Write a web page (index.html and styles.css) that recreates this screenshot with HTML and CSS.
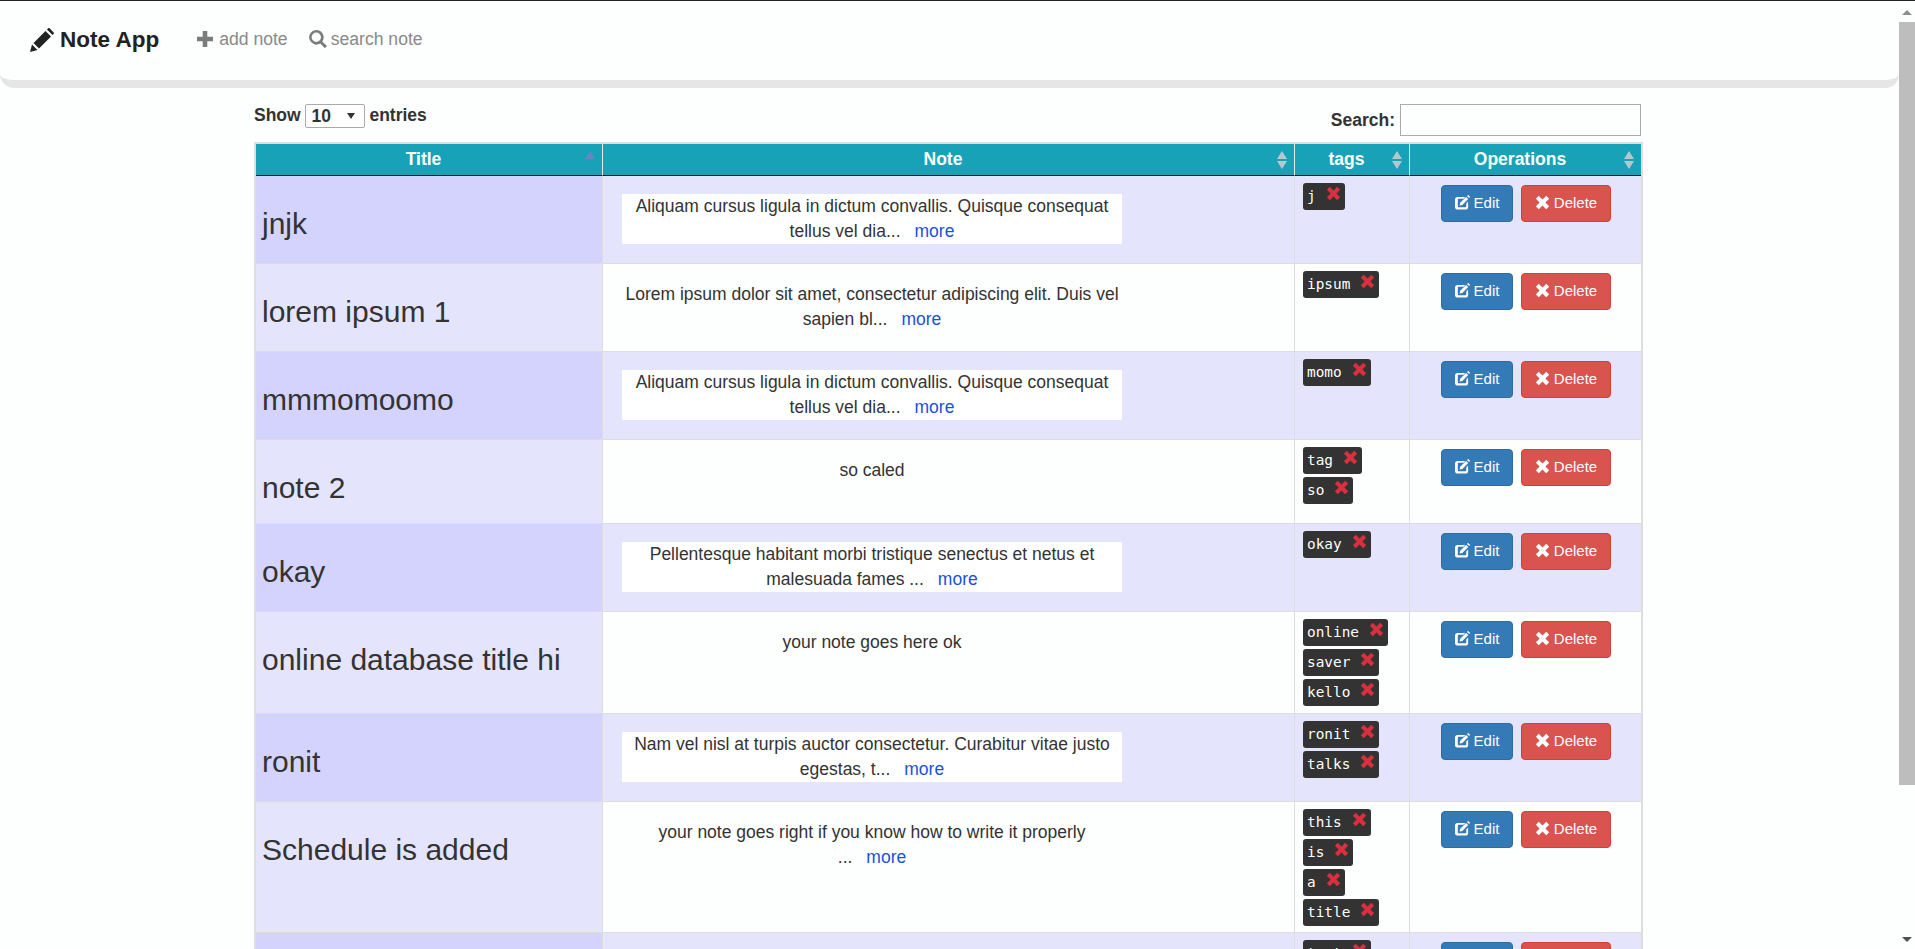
FILE: index.html
```html
<!DOCTYPE html>
<html lang="en">
<head>
<meta charset="utf-8">
<title>Note App</title>
<link rel="stylesheet" href="styles.css">
</head>
<body>
<svg class="defs" width="0" height="0" aria-hidden="true">
  <symbol id="i-pencil" viewBox="0 0 24 24"><path d="M0 24l2-7.500 5.500 5.500zM3.500 15L15.500 3l5.500 5.500-12 12zM17 1.500L18.200.3c.4-.4 1-.4 1.400 0l4.100 4.100c.4.400.4 1 0 1.400L22.500 7z"/></symbol>
  <symbol id="i-plus" viewBox="0 0 16 16"><path d="M5.700 0h4.600v5.700H16v4.600h-5.700V16H5.700v-5.700H0V5.700h5.700z"/></symbol>
  <symbol id="i-search" viewBox="0 0 18 18"><path fill-rule="evenodd" d="M7.300 0a7.300 7.300 0 0 1 5.900 11.600l4.800 4.500-2.100 2.100-4.600-4.700A7.300 7.300 0 1 1 7.300 0zm0 2.600a4.700 4.700 0 1 0 0 9.400 4.700 4.700 0 0 0 0-9.400z"/></symbol>
  <symbol id="i-edit" viewBox="0 0 16 16"><path d="M3 2h8L9 4H3.800c-.5 0-.8.300-.8.800v7.400c0 .5.300.8.800.8h7.400c.5 0 .8-.3.800-.8V9l2-2v6c0 1.400-1.200 2.500-2.500 2.500h-8C1.200 15.500 0 14.400 0 13V4.500C0 3.100 1.200 2 2.500 2z"/><path d="M5.500 8.300L11.800 2l2.300 2.300-6.300 6.300-2.800.5zM12.800 1l.8-.8c.2-.2.500-.2.700 0l1.500 1.500c.2.200.2.500 0 .7l-.8.800z"/></symbol>
  <symbol id="i-remove" viewBox="0 0 14 14"><path d="M3.500.8L7 4.300 10.500.8l2.700 2.700L9.700 7l3.500 3.500-2.700 2.700L7 9.700l-3.500 3.500-2.700-2.700L4.300 7 .8 3.500z"/></symbol>
</svg>
<div class="shell">
  <div class="page">
    <header class="navbar">
      <a class="brand"><svg class="ic-brand"><use href="#i-pencil"/></svg>Note App</a>
      <a class="nav-link"><svg class="ic-plus"><use href="#i-plus"/></svg>add note</a>
      <a class="nav-link"><svg class="ic-search"><use href="#i-search"/></svg>search note</a>
    </header>
    <main class="content">
      <div class="controls">
        <label class="length">Show <span class="select">10<span class="caret"></span></span> entries</label>
        <label class="filter">Search: <span class="search-box"></span></label>
      </div>
      <table class="notes">
        <colgroup><col class="c-title"><col class="c-note"><col class="c-tags"><col class="c-ops"></colgroup>
        <thead>
          <tr>
            <th class="sorted">Title</th>
            <th>Note</th>
            <th>tags</th>
            <th>Operations</th>
          </tr>
        </thead>
        <tbody>
          <tr class="odd h88">
            <td class="title">jnjk</td>
            <td class="note"><div class="txt boxed">Aliquam cursus ligula in dictum convallis. Quisque consequat tellus vel dia...<a class="more">more</a></div></td>
            <td class="tags"><span class="tag">j<svg><use href="#i-remove"/></svg></span></td>
            <td class="ops"><a class="btn edit"><svg><use href="#i-edit"/></svg>Edit</a><a class="btn del"><svg><use href="#i-remove"/></svg>Delete</a></td>
          </tr>
          <tr class="even h88">
            <td class="title">lorem ipsum 1</td>
            <td class="note"><div class="txt">Lorem ipsum dolor sit amet, consectetur adipiscing elit. Duis vel sapien bl...<a class="more">more</a></div></td>
            <td class="tags"><span class="tag">ipsum<svg><use href="#i-remove"/></svg></span></td>
            <td class="ops"><a class="btn edit"><svg><use href="#i-edit"/></svg>Edit</a><a class="btn del"><svg><use href="#i-remove"/></svg>Delete</a></td>
          </tr>
          <tr class="odd h88">
            <td class="title">mmmomoomo</td>
            <td class="note"><div class="txt boxed">Aliquam cursus ligula in dictum convallis. Quisque consequat tellus vel dia...<a class="more">more</a></div></td>
            <td class="tags"><span class="tag">momo<svg><use href="#i-remove"/></svg></span></td>
            <td class="ops"><a class="btn edit"><svg><use href="#i-edit"/></svg>Edit</a><a class="btn del"><svg><use href="#i-remove"/></svg>Delete</a></td>
          </tr>
          <tr class="even h84">
            <td class="title">note 2</td>
            <td class="note"><div class="txt">so caled</div></td>
            <td class="tags"><span class="tag">tag<svg><use href="#i-remove"/></svg></span><span class="tag">so<svg><use href="#i-remove"/></svg></span></td>
            <td class="ops"><a class="btn edit"><svg><use href="#i-edit"/></svg>Edit</a><a class="btn del"><svg><use href="#i-remove"/></svg>Delete</a></td>
          </tr>
          <tr class="odd h88">
            <td class="title">okay</td>
            <td class="note"><div class="txt boxed">Pellentesque habitant morbi tristique senectus et netus et malesuada fames ...<a class="more">more</a></div></td>
            <td class="tags"><span class="tag">okay<svg><use href="#i-remove"/></svg></span></td>
            <td class="ops"><a class="btn edit"><svg><use href="#i-edit"/></svg>Edit</a><a class="btn del"><svg><use href="#i-remove"/></svg>Delete</a></td>
          </tr>
          <tr class="even h102">
            <td class="title">online database title hi</td>
            <td class="note"><div class="txt">your note goes here ok</div></td>
            <td class="tags"><span class="tag">online<svg><use href="#i-remove"/></svg></span><span class="tag">saver<svg><use href="#i-remove"/></svg></span><span class="tag">kello<svg><use href="#i-remove"/></svg></span></td>
            <td class="ops"><a class="btn edit"><svg><use href="#i-edit"/></svg>Edit</a><a class="btn del"><svg><use href="#i-remove"/></svg>Delete</a></td>
          </tr>
          <tr class="odd h88">
            <td class="title">ronit</td>
            <td class="note"><div class="txt boxed">Nam vel nisl at turpis auctor consectetur. Curabitur vitae justo egestas, t...<a class="more">more</a></div></td>
            <td class="tags"><span class="tag">ronit<svg><use href="#i-remove"/></svg></span><span class="tag">talks<svg><use href="#i-remove"/></svg></span></td>
            <td class="ops"><a class="btn edit"><svg><use href="#i-edit"/></svg>Edit</a><a class="btn del"><svg><use href="#i-remove"/></svg>Delete</a></td>
          </tr>
          <tr class="even h131">
            <td class="title">Schedule is added</td>
            <td class="note"><div class="txt">your note goes right if you know how to write it properly<br>...<a class="more">more</a></div></td>
            <td class="tags"><span class="tag">this<svg><use href="#i-remove"/></svg></span><span class="tag">is<svg><use href="#i-remove"/></svg></span><span class="tag">a<svg><use href="#i-remove"/></svg></span><span class="tag">title<svg><use href="#i-remove"/></svg></span></td>
            <td class="ops"><a class="btn edit"><svg><use href="#i-edit"/></svg>Edit</a><a class="btn del"><svg><use href="#i-remove"/></svg>Delete</a></td>
          </tr>
          <tr class="odd h88">
            <td class="title">test</td>
            <td class="note"><div class="txt boxed">your note</div></td>
            <td class="tags"><span class="tag">test<svg><use href="#i-remove"/></svg></span></td>
            <td class="ops"><a class="btn edit"><svg><use href="#i-edit"/></svg>Edit</a><a class="btn del"><svg><use href="#i-remove"/></svg>Delete</a></td>
          </tr>
        </tbody>
      </table>
    </main>
  </div>
  <aside class="scrollbar">
    <span class="arrow up"></span>
    <span class="thumb"></span>
    <span class="arrow down"></span>
  </aside>
</div>
</body>
</html>
```
FILE: styles.css
```css
* { box-sizing: border-box; }
html, body { margin: 0; height: 100%; overflow: hidden; }
body { background: #fdfefe; color: #333; font-family: "Liberation Sans", Arial, sans-serif; font-size: 17.5px; }
.defs { position: absolute; }
.shell { display: flex; height: 949px; border-top: 1px solid #222; }
.page { flex: 1; min-width: 0; overflow: hidden; }

.navbar { display: flex; align-items: center; height: 87px; padding: 0 0 1px 30px; background: #fdfefe; border-bottom: 8px solid #e6e6e6; border-radius: 0 0 14px 14px; }
.brand { display: flex; align-items: center; font-size: 22.500px; font-weight: 700; color: #222; margin-right: 38px; }
.ic-brand { width: 24px; height: 24px; margin-right: 6px; fill: #222; }
.nav-link { display: flex; align-items: center; font-size: 17.600px; color: #8a8a8a; margin-right: 21px; position: relative; top: -1px; }
.ic-plus { width: 16px; height: 16px; margin-right: 6px; fill: #7b7b7b; }
.ic-search { width: 18px; height: 18px; margin-right: 4px; fill: #7b7b7b; }

.content { width: 1387px; margin-left: 254px; }
.controls { display: flex; justify-content: space-between; height: 54px; font-weight: 700; }
.length { padding-top: 17px; }
.select { display: inline-flex; align-items: center; justify-content: space-between; width: 60px; height: 24px; margin: -1px 0 0 -1px; padding: 0 9px 0 6px; vertical-align: middle; border: 1px solid #aaa; border-radius: 2px; background: #fff; font-weight: 700; }
.caret { width: 0; height: 0; border: 4px solid transparent; border-top: 6px solid #333; border-bottom: 0; }
.filter { display: flex; align-items: flex-start; padding-top: 16px; line-height: 32px; }
.search-box { width: 241px; height: 32px; margin-left: 5px; border: 1px solid #aaa; }

.notes { width: 1387px; table-layout: fixed; border-collapse: separate; border-spacing: 0; border: 2px solid #ddd; border-bottom: 0; }
.c-title { width: 347px; }
.c-note { width: 692px; }
.c-tags { width: 115px; }
.c-ops { width: 231px; }
th { position: relative; height: 32px; padding: 0 11px 0 0; background: #18a2b8; color: #fff; font-size: 17.500px; font-weight: 700; text-align: center; border-right: 1px solid #e6e6e6; border-bottom: 1px solid #111; }
th:last-child { border-right: 0; }
th::before, th::after { content: ""; position: absolute; right: 7px; width: 0; height: 0; border-left: 5px solid transparent; border-right: 5px solid transparent; }
th::before { top: 7px; border-bottom: 8px solid #b7c8cc; }
th::after { top: 17px; border-top: 8px solid #b7c8cc; }
th.sorted::before { border-bottom-color: #6b84c8; }
th.sorted::after { display: none; }

td { padding: 0; vertical-align: top; border-right: 1px solid #ddd; border-bottom: 1px solid #ddd; }
td:last-child { border-right: 0; }
.h88 { height: 88px; }
.h84 { height: 84px; }
.h102 { height: 102px; }
.h131 { height: 131px; }
.odd td { background: #e4e4fd; }
.odd td.title { background: #d3d3fd; }
.even td { background: #fdfefe; }
.even td.title { background: #e4e4fd; }
td.title { padding: 31px 6px 0; font-size: 30px; line-height: 34px; }
.note { padding: 18px 0 0 19px; }
.txt { width: 500px; text-align: center; line-height: 25px; font-size: 17.500px; }
.boxed { background: #fff; }
.more { color: #1a50e0; margin-left: 14px; }
.tags { padding: 7px 0 0 8px; }
.tag { display: table; height: 27px; margin-bottom: 3px; padding: 0 4px; line-height: 27px; background: #333; color: #fff; border-radius: 3px; font-family: "DejaVu Sans Mono", "Liberation Mono", monospace; font-size: 14.400px; white-space: nowrap; }
.tag svg { width: 15px; height: 15px; margin-left: 10px; fill: #d9303f; vertical-align: 0; }
.ops { padding: 9px 0 0 31px; }
.btn { display: inline-flex; align-items: center; justify-content: center; height: 37px; padding-bottom: 2px; border-radius: 4px; color: #fff; font-size: 15px; vertical-align: top; }
.btn svg { width: 15px; height: 15px; margin-right: 4px; fill: #fff; }
.edit { width: 72px; background: #337ab7; border: 1px solid #2e6da4; margin-right: 8px; }
.del { width: 90px; background: #d9534f; border: 1px solid #d43f3a; }

.scrollbar { flex: none; width: 16px; display: flex; flex-direction: column; align-items: center; }
.thumb { flex: none; width: 16px; height: 763px; background: #bdbdbd; margin-top: 7px; }
.arrow { width: 0; height: 0; border-left: 5px solid transparent; border-right: 5px solid transparent; }
.up { margin-top: 9px; border-bottom: 5px solid #8f8f8f; }
.down { margin-top: auto; margin-bottom: 7px; border-top: 5px solid #505050; }
```
